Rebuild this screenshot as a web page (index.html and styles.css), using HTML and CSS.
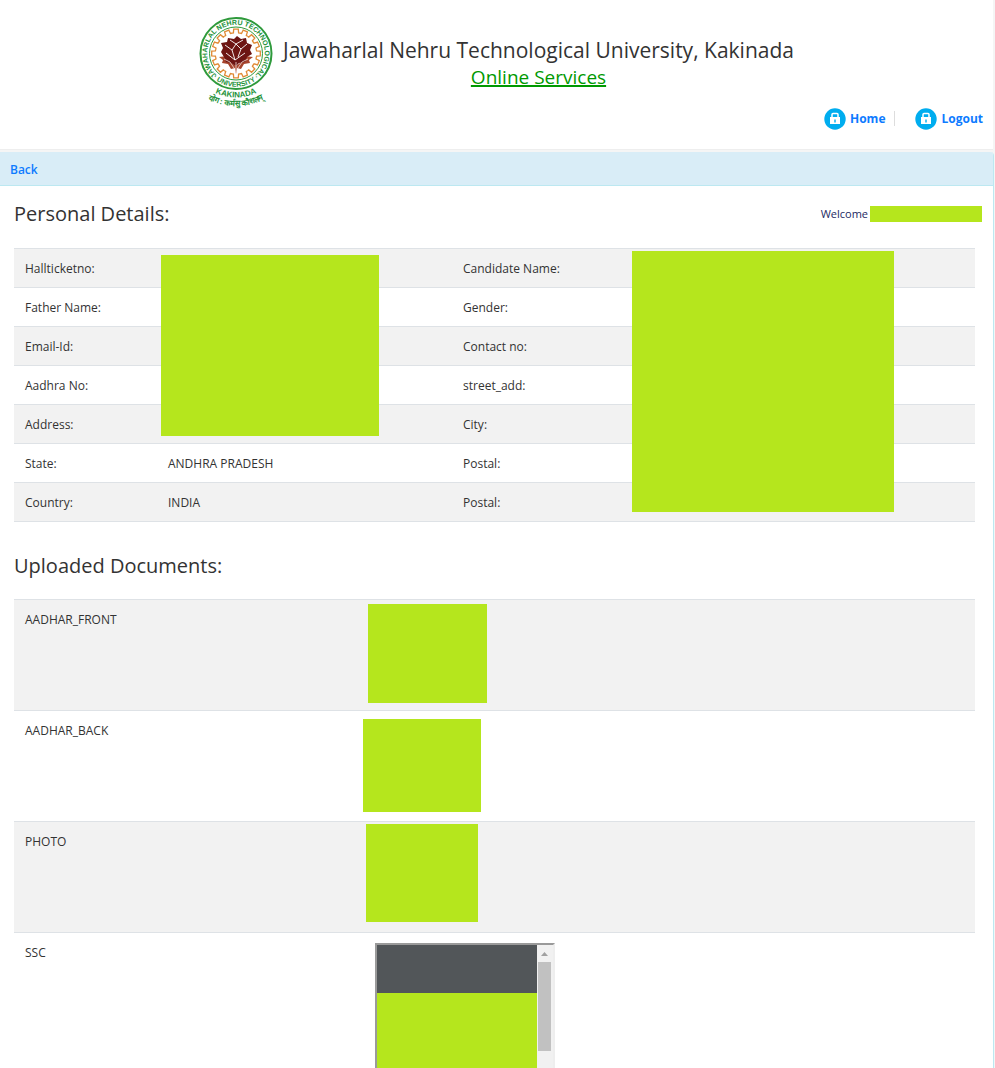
FILE: index.html
```html
<!DOCTYPE html>
<html lang="en">
<head>
<meta charset="utf-8">
<title>JNTUK Online Services</title>
<link rel="stylesheet" href="styles.css">
</head>
<body>
<header class="header">
  <div class="brand">
    <svg class="seal" viewBox="0 0 74 92" role="img" aria-label="University seal">
      <defs>
        <path id="arc-top" d="M16.600 57.900A28.800 28.800 0 1 1 57.400 57.900"/>
        <path id="arc-low" d="M3.700 37.500A33.300 33.300 0 0 0 70.300 37.500"/>
        <path id="arc-city" d="M9 73Q37 90 65 73"/>
        <path id="arc-motto" d="M4 81Q37 99 70 81"/>
        <path id="tooth" d="M-4.100-20.300L-2.600-20.600L-2.300-24.300H2.300L2.600-20.600L4.100-20.300"/>
        <g id="teeth">
          <use href="#tooth"/><use href="#tooth" transform="rotate(22.500)"/><use href="#tooth" transform="rotate(45)"/><use href="#tooth" transform="rotate(67.500)"/>
        </g>
      </defs>
      <circle cx="37" cy="37.500" r="35.500" fill="#fff" stroke="#2f9a3c" stroke-width="2"/>
      <circle cx="37" cy="37.500" r="26.500" fill="none" stroke="#2f9a3c" stroke-width="1"/>
      <g transform="translate(37 37.500)" fill="none" stroke="#e08a35" stroke-width="1.300">
        <use href="#teeth"/><use href="#teeth" transform="rotate(90)"/><use href="#teeth" transform="rotate(180)"/><use href="#teeth" transform="rotate(270)"/>
      </g>
      <path d="M20 41l8-1 5 7 4 3 4-3 5-7 8 1-4 3 1 3-6 1-3 5-4-1-1 6-1-6-4 1-3-5-6-1 1-3z" fill="#a6442d"/>
      <path d="M22 36l2-4-2-5 6-1 1-4 6 1 3-3 4 3 5-1 1 5 5 2-2 5 2 4-5 3-2 5-6 1-3 3-5-3-5-1-2-5z" fill="#6d1513"/>
      <path d="M31 24l6 4 7-4M26 29l7 5 4-6 5 5 6-5M27 37l9 7 10-7M33 34l3 10M42 33l-3 8" fill="none" stroke="#fff" stroke-width=".9"/>
      <path d="M25 43l6 3 4 6M49 43l-6 3-4 6M37 46v10" fill="none" stroke="#f3ddd5" stroke-width=".8"/>
      <g fill="#23923a" font-family="Liberation Sans, sans-serif" font-weight="700" text-anchor="middle">
        <text font-size="7"><textPath href="#arc-top" startOffset="50%">JAWAHARLAL NEHRU TECHNOLOGICAL</textPath></text>
        <text font-size="7"><textPath href="#arc-low" startOffset="50%">· UNIVERSITY ·</textPath></text>
        <text font-size="8"><textPath href="#arc-city" startOffset="50%">KAKINADA</textPath></text>
        <text font-size="8"><textPath href="#arc-motto" startOffset="50%">योग: कर्मसु कौशलम्</textPath></text>
      </g>
    </svg>
    <div class="titles">
      <h1 class="name">Jawaharlal Nehru Technological University, Kakinada</h1>
      <p class="service">Online Services</p>
    </div>
  </div>
  <nav class="nav">
    <a class="nav-link" href="#"><svg class="lock" viewBox="0 0 22 22" aria-hidden="true"><circle cx="11" cy="11" r="10.700" fill="#00adef"/><path d="M8 10V6.500q0-1 1-1h4q1 0 1 1V10" fill="none" stroke="#fff" stroke-width="1.500"/><path d="M6 9h10v7H6z" fill="#fff"/><path d="M10.300 11.500h1.400v3h-1.400z" fill="#00adef"/></svg>Home</a>
    <a class="nav-link" href="#"><svg class="lock" viewBox="0 0 22 22" aria-hidden="true"><circle cx="11" cy="11" r="10.700" fill="#00adef"/><path d="M8 10V6.500q0-1 1-1h4q1 0 1 1V10" fill="none" stroke="#fff" stroke-width="1.500"/><path d="M6 9h10v7H6z" fill="#fff"/><path d="M10.300 11.500h1.400v3h-1.400z" fill="#00adef"/></svg>Logout</a>
  </nav>
</header>
<main class="panel">
  <div class="bar"><a href="#">Back</a></div>
  <div class="content">
    <div class="heading-row">
      <h2 class="heading">Personal Details:</h2>
      <div class="welcome">Welcome <span class="mask mask-user"></span></div>
    </div>
    <div class="details">
      <table class="table details-table">
        <tbody>
          <tr><td>Hallticketno:</td><td></td><td>Candidate Name:</td><td></td></tr>
          <tr><td>Father Name:</td><td></td><td>Gender:</td><td></td></tr>
          <tr><td>Email-Id:</td><td></td><td>Contact no:</td><td></td></tr>
          <tr><td>Aadhra No:</td><td></td><td>street_add:</td><td></td></tr>
          <tr><td>Address:</td><td></td><td>City:</td><td></td></tr>
          <tr><td>State:</td><td>ANDHRA PRADESH</td><td>Postal:</td><td></td></tr>
          <tr><td>Country:</td><td>INDIA</td><td>Postal:</td><td></td></tr>
        </tbody>
      </table>
      <span class="mask mask-left"></span>
      <span class="mask mask-right"></span>
    </div>
    <h2 class="heading heading-docs">Uploaded Documents:</h2>
    <table class="table docs-table">
      <tbody>
        <tr><td>AADHAR_FRONT</td><td><span class="mask doc-front"></span></td></tr>
        <tr><td>AADHAR_BACK</td><td><span class="mask doc-back"></span></td></tr>
        <tr><td>PHOTO</td><td><span class="mask doc-photo"></span></td></tr>
        <tr><td>SSC</td><td>
          <div class="viewer">
            <div class="viewer-page"><span class="mask"></span></div>
            <div class="scrollbar"><svg class="arrow" viewBox="0 0 7 4" aria-hidden="true"><path d="M0 4l3.500-4L7 4z" fill="#a0a0a0"/></svg><span class="thumb"></span></div>
          </div>
        </td></tr>
      </tbody>
    </table>
  </div>
</main>
</body>
</html>
```
FILE: styles.css
```css
* { box-sizing: border-box; }
body {
  margin: 0;
  height: 100vh;
  overflow: hidden;
  background: #f5f5f5;
  color: #333;
  font: 12px/18px "Open Sans", sans-serif;
}
a { color: #0d7bff; text-decoration: none; }
h1, h2, p { margin: 0; font-weight: 400; }

.header {
  height: 150px;
  margin-right: 2px;
  padding: 16px 10px 0;
  background: #fff;
  border-bottom: 1px solid #eee;
}
.brand { display: flex; justify-content: center; gap: 10px; }
.seal { width: 74px; height: 92px; overflow: visible; }
.titles { padding-top: 21px; text-align: center; }
.name { font-size: 21px; line-height: 26px; }
.service {
  font-size: 19px;
  line-height: 28px;
  color: #090;
  text-decoration: underline;
  text-decoration-thickness: 2px;
}
.nav { display: flex; justify-content: flex-end; }
.nav-link {
  display: flex;
  align-items: center;
  gap: 4px;
  font-size: 12px;
  line-height: 22px;
  font-weight: 700;
}
.nav-link + .nav-link { margin-left: 9px; padding-left: 21px; position: relative; }
.nav-link + .nav-link::before {
  content: "";
  position: absolute;
  left: 0;
  top: 3px;
  height: 15px;
  border-left: 1px solid #ddd;
}
.lock { width: 22px; height: 22px; }

.panel {
  margin: 2px 1px 0 0;
  background: #fff;
  border-right: 1px solid #bce8f1;
  border-radius: 0 4px 0 0;
}
.bar {
  padding: 9px 10px 6px;
  background: #d9edf7;
  border-bottom: 1px solid #bce8f1;
  border-radius: 0 3px 0 0;
  font-weight: 600;
}
.content { padding: 12px 18px 0 14px; }
.heading-row { display: flex; justify-content: space-between; }
.heading { font-size: 20px; line-height: 32px; }
.welcome {
  display: flex;
  align-items: center;
  gap: 2px;
  margin-right: -7px;
  font-size: 11px;
  color: #1c2a63;
}
.mask { display: block; background: #b5e61d; }
.mask-user { width: 112px; height: 16px; }

.details { position: relative; margin-top: 18px; }
.table { width: 100%; border-collapse: collapse; table-layout: fixed; }
.table td {
  padding: 11px 11px 9px;
  border-top: 1px solid #dee2e6;
  vertical-align: top;
  text-align: left;
}
.table tr:nth-child(odd) { background: #f2f2f2; }
.details-table { border-bottom: 1px solid #dee2e6; }
.details-table tr:first-child td:nth-child(1) { width: 143px; }
.details-table tr:first-child td:nth-child(2) { width: 295px; }
.details-table tr:first-child td:nth-child(3) { width: 18%; }
.mask-left, .mask-right { position: absolute; }
.mask-left { left: 147px; top: 7px; width: 218px; height: 181px; }
.mask-right { left: 618px; top: 3px; width: 262px; height: 261px; }

.heading-docs { margin: 28px 0 17px; }
.docs-table tr { height: 111px; }
.docs-table td:first-child { width: 36%; }
.docs-table td:last-child { padding: 4px 3px 0; }
.doc-front { width: 119px; height: 99px; margin-left: 5px; }
.doc-back { width: 118px; height: 93px; margin-top: 4px; }
.doc-photo { width: 112px; height: 98px; margin-left: 3px; margin-top: -2px; }
.viewer {
  display: flex;
  width: 180px;
  height: 154px;
  margin: 6px 0 0 12px;
  border: 2px solid;
  border-color: #9a9a9a #eee #eee #9a9a9a;
  background: #f1f1f1;
}
.viewer-page { width: 160px; padding-top: 48px; background: #525659; }
.viewer-page .mask { height: 102px; }
.scrollbar { width: 16px; padding: 7px 2px 0 1px; }
.arrow { display: block; width: 7px; height: 4px; margin: 0 auto; }
.thumb { display: block; height: 89px; margin-top: 6px; background: #c1c1c1; }
```
